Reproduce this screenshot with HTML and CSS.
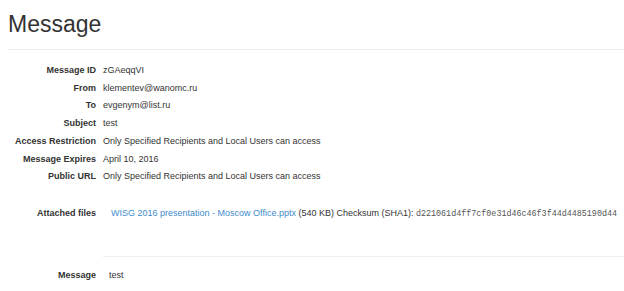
FILE: index.html
```html
<!DOCTYPE html>
<html lang="en">
<head>
    <meta charset="UTF-8">
    <title>Message</title>
    <link rel="stylesheet" href="styles.css">
</head>
<body>
    <div class="page-header">
        <h1>Message</h1>
    </div>

    <div class="details">
        <div class="label">Message ID</div>
        <div class="value">zGAeqqVI</div>
        <div class="label">From</div>
        <div class="value">klementev@wanomc.ru</div>
        <div class="label">To</div>
        <div class="value">evgenym@list.ru</div>
        <div class="label">Subject</div>
        <div class="value">test</div>
        <div class="label">Access Restriction</div>
        <div class="value">Only Specified Recipients and Local Users can access</div>
        <div class="label">Message Expires</div>
        <div class="value">April 10, 2016</div>
        <div class="label">Public URL</div>
        <div class="value">Only Specified Recipients and Local Users can access</div>
    </div>

    <div class="files">
        <div class="label">Attached files</div>
        <div class="value">
            <a href="#">WISG 2016 presentation - Moscow Office.pptx</a> (540 KB) Checksum (SHA1): <code>d221061d4ff7cf0e31d46c46f3f44d4485190d44</code>
        </div>
    </div>

    <div class="separator"></div>

    <div class="files body-row">
        <div class="label">Message</div>
        <div class="value">test</div>
    </div>
</body>
</html>
```

FILE: styles.css
```css
body {
    font-family: "Liberation Sans", Arial, sans-serif;
    font-size: 9px;
    color: #333;
    background-color: #fff;
    margin: 0;
    padding: 0 0 0 8px;
}
.page-header {
    padding-top: 12px;
    padding-bottom: 12px;
    border-bottom: 1px solid #eee;
}
h1 {
    font-size: 23px;
    font-weight: 500;
    line-height: 25px;
    margin: 0;
}
.details {
    display: grid;
    grid-template-columns: 88px 1fr;
    column-gap: 7px;
    row-gap: 5px;
    line-height: 12.7px;
    margin-top: 14px;
}
.label {
    font-weight: bold;
    text-align: right;
}
.files {
    display: grid;
    grid-template-columns: 88px 1fr;
    column-gap: 15px;
    line-height: 12.7px;
    margin-top: 24px;
}
.files a {
    color: #428bca;
    text-decoration: none;
}
code {
    font-family: "Liberation Mono", "Courier New", monospace;
    font-size: 8.4px;
    color: #555;
}
.separator {
    margin-top: 35px;
    margin-left: 95px;
    border-top: 1px solid #eee;
}
.body-row {
    margin-top: 12px;
    column-gap: 13px;
}
```
